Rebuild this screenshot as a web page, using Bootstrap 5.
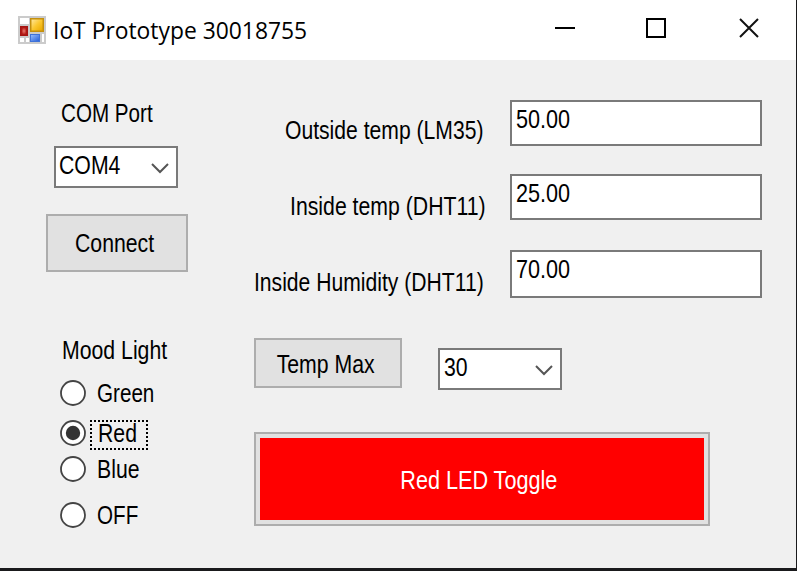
<!DOCTYPE html>
<html lang="en">
<head>
<meta charset="utf-8">
<meta name="viewport" content="width=device-width, initial-scale=1">
<title>IoT Prototype 30018755</title>
<link href="https://cdn.jsdelivr.net/npm/bootstrap@5.3.0/dist/css/bootstrap.min.css" rel="stylesheet">
<style>
  body { background: #1a1a1c; }
  .app-window { width: 796px; height: 568px; background: #f0f0f0; color: #000; font: 25px/30px "Liberation Sans", Arial, sans-serif; overflow: hidden; }
  .title-bar { height: 60px; background: #fff; padding: 0 36px 0 17px; }
  .title-text { font: 23.5px/32px "Open Sans", "Noto Sans", sans-serif; margin-left: 6px; transform: scaleX(.972); transform-origin: left; }
  .caption-icons { margin-bottom: 4px; }
  .icon-min { margin-right: 69px; }
  .icon-max { margin-right: 71px; }
  /* narrow system lettering */
  .nar { display: inline-block; white-space: nowrap; transform: scaleX(var(--sx, .85)); transform-origin: left; }
  .nar-mid { transform-origin: center; }
  .sx-port { --sx: .825; }
  .sx-wide { --sx: .865; }
  .sx-label { --sx: .845; }
  .side { width: 254px; padding: 38px 0 0 46px; }
  .lbl-port { margin-left: 15px; }
  .lbl-mood { margin: 63px 0 13px 16px; }
  .combo { width: 124px; height: 42px; background: #fff; border: 2px solid #7a7a7a; padding: 2px 7px 0 3px; }
  .combo svg { margin-top: 12px; }
  .combo-port { margin: 18px 0 26px 8px; }
  .combo-max { margin: 10px 0 0 36px; padding-left: 4px; }
  .win-btn { background: #e1e1e1; border: 2px solid #adadad; border-radius: 0; padding: 0; font: inherit; color: #000; }
  .btn-connect { width: 142px; height: 58px; padding: 0 4px 0 0; }
  .btn-max { width: 148px; height: 50px; padding: 2px 5px 0 0; }
  .btn-led { width: 456px; height: 94px; padding: 4px; margin-top: 42px; }
  .led-face { background: #f00; color: #fff; padding: 2px 6px 0 0; }
  .opt { height: 30px; padding-left: 13px; }
  .opt svg { flex: none; }
  .opt-text { margin-left: 10px; }
  .opt-1 { margin-bottom: 10px; }
  .opt-2 { margin-bottom: 6px; }
  .opt-3 { margin-bottom: 16px; }
  .focus-box { width: 58px; height: 30px; margin: 4px 0 0 3px; padding-left: 6px; border: 2px dotted #000; line-height: 22px; }
  .main { padding-top: 40px; }
  .reading { width: 508px; }
  .r-label { width: 256px; height: 46px; padding-top: 15px; }
  .r-value { width: 252px; height: 46px; background: #fff; border: 2px solid #7a7a7a; padding: 2px 4px; }
  .r-out { margin-bottom: 28px; } .r-out .r-label { padding-left: 31px; }
  .r-in { margin-bottom: 30px; } .r-in .r-label { padding: 17px 0 0 36px; }
  .r-hum .r-label { padding: 17px 0 0 0; }
  .r-hum .r-value { height: 48px; }
  .r-hum { margin-bottom: 40px; }
</style>
<script src="https://cdn.jsdelivr.net/npm/bootstrap@5.3.0/dist/js/bootstrap.bundle.min.js"></script>
</head>
<body class="m-0 overflow-hidden">
<div class="app-window">
  <header class="title-bar d-flex align-items-center">
    <svg width="30" height="30" viewBox="0 0 30 30" aria-hidden="true">
      <defs>
        <linearGradient id="gy" x1="0" y1="0" x2="1" y2="1"><stop offset="0" stop-color="#ffe69a"/><stop offset=".5" stop-color="#fbc72e"/><stop offset="1" stop-color="#e9a800"/></linearGradient>
        <linearGradient id="gb" x1="0" y1="0" x2="1" y2="1"><stop offset="0" stop-color="#90b8ff"/><stop offset="1" stop-color="#2c63d8"/></linearGradient>
        <radialGradient id="gr"><stop offset="0" stop-color="#e87c70"/><stop offset="1" stop-color="#b81c18"/></radialGradient>
      </defs>
      <rect x="1" y="1" width="28" height="28" fill="#cbcbcb"/>
      <path fill="#fff" d="M3 3h9v6H3zM3 23h4v4H3zM9 23h3v4H9zM25 19h2v8h-2z"/>
      <rect x="3" y="11" width="8" height="10" fill="#a61512"/><rect x="4.500" y="12.500" width="5" height="7" fill="url(#gr)"/>
      <rect x="13" y="3" width="14" height="14" fill="#c4900e"/><rect x="14.500" y="4.500" width="11" height="11" fill="url(#gy)"/>
      <rect x="13" y="19" width="10" height="8" fill="#3f72d8"/><rect x="14" y="20" width="8" height="6" fill="url(#gb)"/>
    </svg>
    <span class="title-text text-nowrap">IoT Prototype 30018755</span>
    <div class="caption-icons d-flex align-items-center ms-auto">
      <svg class="icon-min" width="22" height="22" viewBox="0 0 22 22"><path d="M1 11h20" stroke="#000" stroke-width="2"/></svg>
      <svg class="icon-max" width="22" height="22" viewBox="0 0 22 22"><path d="M2 2h18v18H2z" fill="none" stroke="#000" stroke-width="2"/></svg>
      <svg width="22" height="22" viewBox="0 0 22 22"><path d="M2 2l18 18M20 2L2 20" stroke="#111" stroke-width="2"/></svg>
    </div>
  </header>

  <div class="d-flex">
    <section class="side flex-shrink-0">
      <div class="lbl-port"><span class="nar sx-port">COM Port</span></div>
      <div class="combo combo-port d-flex justify-content-between align-items-start" role="combobox">
        <span class="nar">COM4</span>
        <svg width="18" height="12" viewBox="0 0 18 12"><path d="M1 2l8 8 8-8" fill="none" stroke="#555" stroke-width="2"/></svg>
      </div>
      <button type="button" class="btn win-btn btn-connect d-block"><span class="nar nar-mid">Connect</span></button>

      <div class="lbl-mood"><span class="nar">Mood Light</span></div>
      <div class="opt opt-1 d-flex align-items-center" role="radio">
        <svg width="28" height="28" viewBox="0 0 28 28"><circle cx="14" cy="14" r="12" fill="#fff" stroke="#444" stroke-width="1.800"/></svg>
        <span class="nar opt-text sx-port">Green</span>
      </div>
      <div class="opt opt-2 d-flex align-items-center" role="radio">
        <svg width="28" height="28" viewBox="0 0 28 28"><circle cx="14" cy="14" r="12" fill="#fff" stroke="#444" stroke-width="1.800"/><circle cx="14" cy="14" r="7.200" fill="#333"/></svg>
        <span class="focus-box"><span class="nar">Red</span></span>
      </div>
      <div class="opt opt-3 d-flex align-items-center" role="radio">
        <svg width="28" height="28" viewBox="0 0 28 28"><circle cx="14" cy="14" r="12" fill="#fff" stroke="#444" stroke-width="1.800"/></svg>
        <span class="nar opt-text">Blue</span>
      </div>
      <div class="opt d-flex align-items-center" role="radio">
        <svg width="28" height="28" viewBox="0 0 28 28"><circle cx="14" cy="14" r="12" fill="#fff" stroke="#444" stroke-width="1.800"/></svg>
        <span class="nar opt-text sx-port">OFF</span>
      </div>
    </section>

    <section class="main">
      <div class="reading r-out d-flex">
        <div class="r-label"><span class="nar sx-label">Outside temp (LM35)</span></div>
        <div class="r-value"><span class="nar sx-wide">50.00</span></div>
      </div>
      <div class="reading r-in d-flex">
        <div class="r-label"><span class="nar">Inside temp (DHT11)</span></div>
        <div class="r-value"><span class="nar sx-wide">25.00</span></div>
      </div>
      <div class="reading r-hum d-flex">
        <div class="r-label"><span class="nar sx-label">Inside Humidity (DHT11)</span></div>
        <div class="r-value"><span class="nar sx-wide">70.00</span></div>
      </div>
      <div class="d-flex align-items-start">
        <button type="button" class="btn win-btn btn-max"><span class="nar nar-mid">Temp Max</span></button>
        <div class="combo combo-max d-flex justify-content-between align-items-start" role="combobox">
          <span class="nar">30</span>
          <svg width="18" height="12" viewBox="0 0 18 12"><path d="M1 2l8 8 8-8" fill="none" stroke="#555" stroke-width="2"/></svg>
        </div>
      </div>
      <button type="button" class="btn win-btn btn-led d-flex">
        <span class="led-face w-100 h-100 d-flex align-items-center justify-content-center"><span class="nar nar-mid sx-wide">Red LED Toggle</span></span>
      </button>
    </section>
  </div>
</div>
</body>
</html>
